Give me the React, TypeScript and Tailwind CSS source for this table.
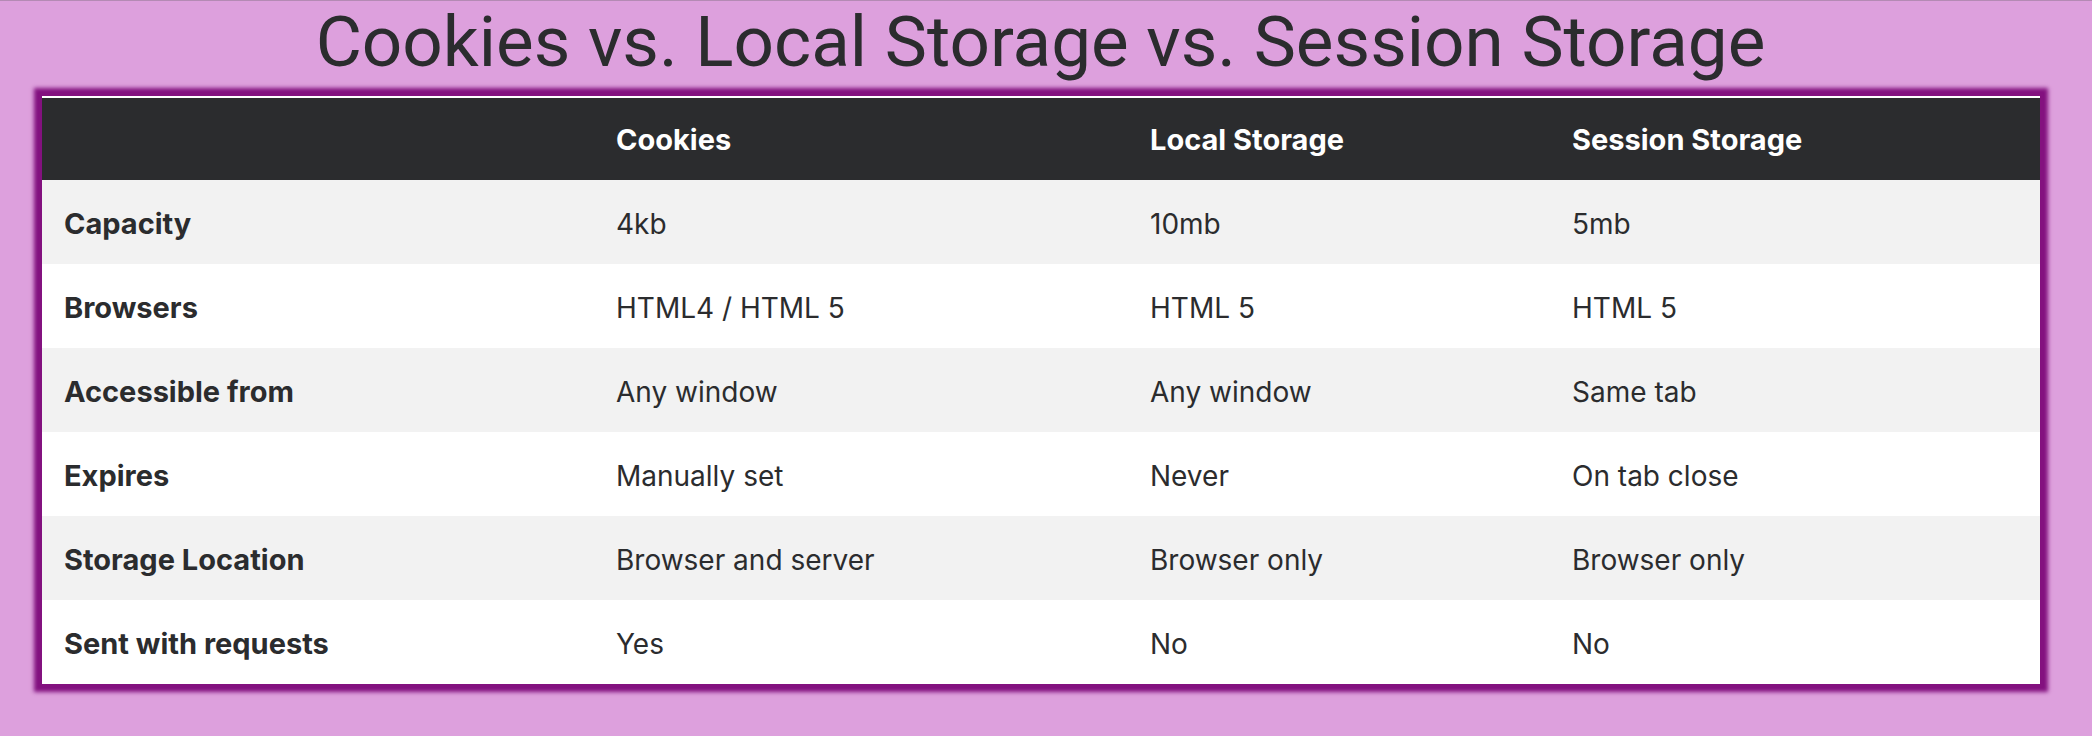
import React from "react";

const rows: [string, string, string, string][] = [
  ["Capacity", "4kb", "10mb", "5mb"],
  ["Browsers", "HTML4 / HTML 5", "HTML 5", "HTML 5"],
  ["Accessible from", "Any window", "Any window", "Same tab"],
  ["Expires", "Manually set", "Never", "On tab close"],
  ["Storage Location", "Browser and server", "Browser only", "Browser only"],
  ["Sent with requests", "Yes", "No", "No"],
];

const cols = "grid grid-cols-[552px_534px_422px_490px]";

export default function App() {
  return (
    <div className="w-[2092px] h-[736px] bg-[#dda0dd] border-t border-[#b48ab4] overflow-hidden font-['Inter','Noto_Sans',sans-serif] text-[#2b2c2e]">
      <h1 className="h-[84px] leading-[84px] -mt-px pr-[11px] text-center text-[71px] font-normal font-['Roboto','Liberation_Sans',sans-serif] text-[#2b2c2e]">
        Cookies vs. Local Storage vs. Session Storage
      </h1>
      <div className="mt-[12px] ml-[42px] w-[1998px] bg-white pt-[2px] shadow-[0_0_4px_8px_#83117f]">
        <div className={`${cols} h-[82px] bg-[#2b2c2e] text-white font-bold text-[29px] items-center`}>
          <div className="px-[22px] pt-[1px]"></div>
          <div className="px-[22px] pt-[1px]">Cookies</div>
          <div className="px-[22px] pt-[1px]">Local Storage</div>
          <div className="px-[22px] pt-[1px]">Session Storage</div>
        </div>
        {rows.map((r, i) => (
          <div
            key={i}
            className={`${cols} h-[84px] items-center text-[28px] ${i % 2 === 0 ? "bg-[#f2f2f2]" : "bg-white"}`}
          >
            <div className="px-[22px] pt-[4px] font-bold text-[29px]">{r[0]}</div>
            <div className="px-[22px] pt-[4px]">{r[1]}</div>
            <div className="px-[22px] pt-[4px]">{r[2]}</div>
            <div className="px-[22px] pt-[4px]">{r[3]}</div>
          </div>
        ))}
      </div>
    </div>
  );
}
